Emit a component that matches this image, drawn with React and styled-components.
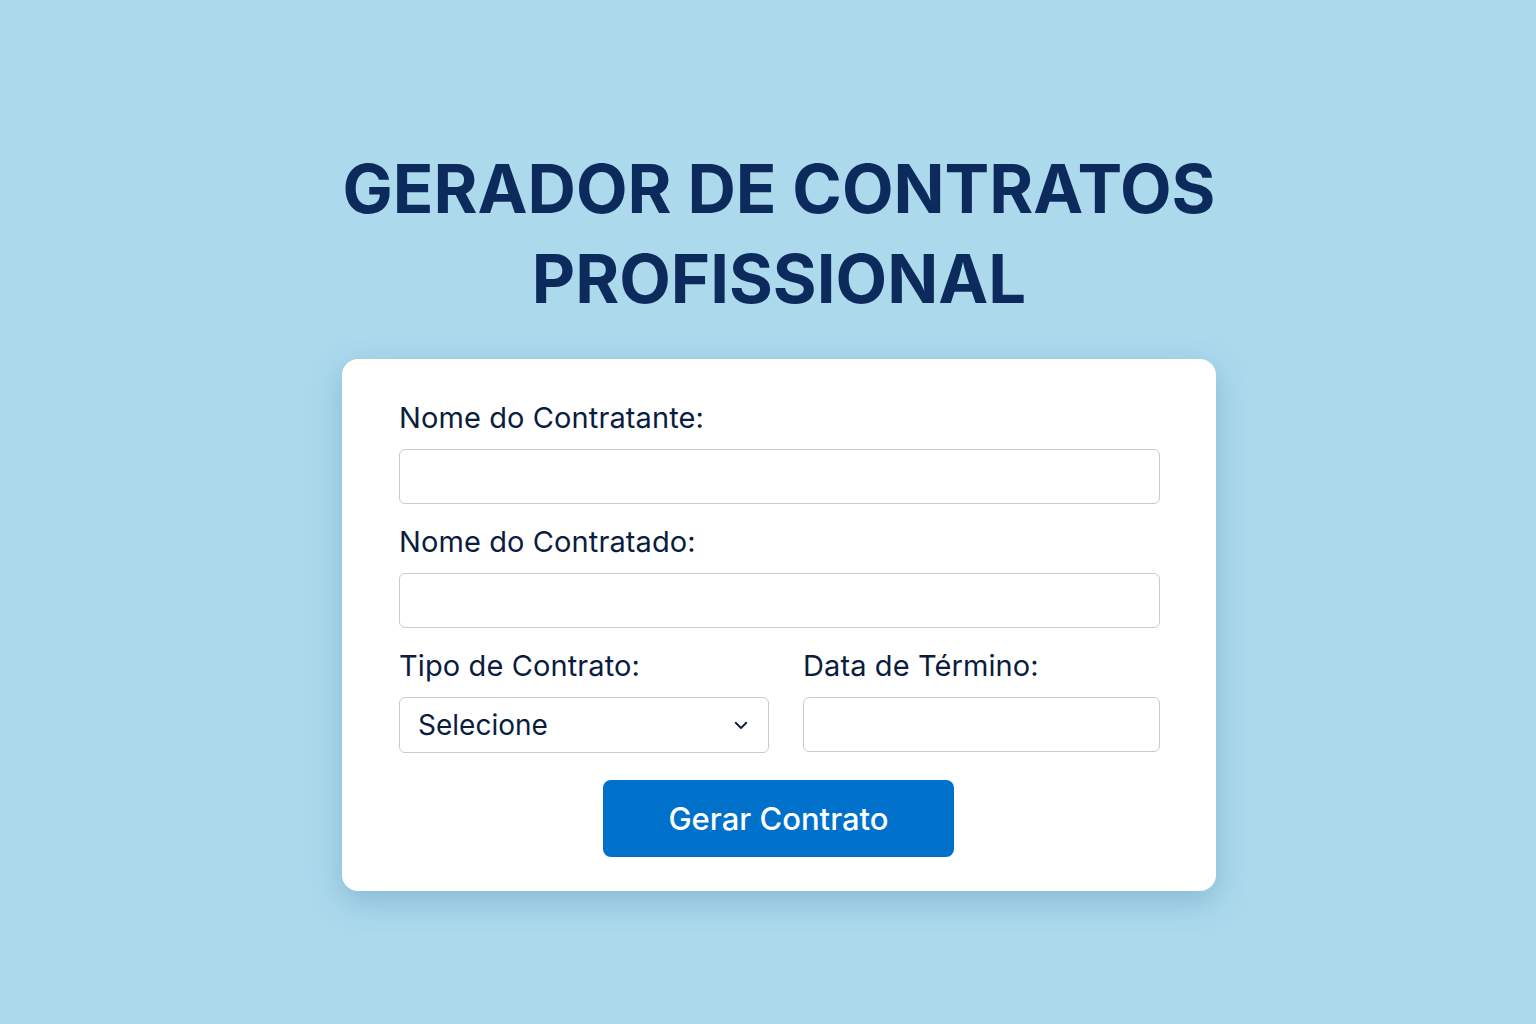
import styled, { createGlobalStyle } from 'styled-components'

const GlobalStyle = createGlobalStyle`
  html, body {
    margin: 0;
    padding: 0;
    background: #acd9ec;
  }
  * { box-sizing: border-box; }
`

const Page = styled.div`
  width: 1536px;
  height: 1024px;
  background: #acd9ec;
  display: flex;
  flex-direction: column;
  align-items: center;
  padding-top: 144px;
  padding-left: 22px;
  font-family: Inter, "Noto Sans", sans-serif;
`

const Title = styled.h1`
  margin: 0 0 35px;
  text-align: center;
  color: #0d2a5c;
  font-size: 67px;
  font-weight: 700;
  line-height: 90px;
  letter-spacing: 0;
`

const Card = styled.form`
  width: 874px;
  background: #ffffff;
  border-radius: 16px;
  padding: 40px 56px 34px 57px;
  box-shadow: 0 10px 30px rgba(60, 130, 170, 0.35);
  display: flex;
  flex-direction: column;
`

const Field = styled.div`
  display: flex;
  flex-direction: column;
  flex: ${p => p.$grow || 'none'};
  margin-bottom: 19px;
`

const Row = styled.div`
  display: flex;
  gap: 34px;
`

const Label = styled.label`
  color: #0b1d3f;
  font-size: 29px;
  line-height: 38px;
  margin-bottom: 12px;
  letter-spacing: 0.1px;
`

const Input = styled.input`
  height: 55px;
  width: 100%;
  border: 1.5px solid #c8cbd1;
  border-radius: 6px;
  background: #fff;
  font-family: inherit;
  font-size: 26px;
  padding: 0 18px;
  outline: none;
`

const SelectBox = styled.div`
  height: 56px;
  width: 370px;
  border: 1.5px solid #c8cbd1;
  border-radius: 6px;
  display: flex;
  align-items: center;
  justify-content: space-between;
  padding: 0 18px 0 18px;
  color: #0b1d3f;
  font-size: 28px;
`

const Button = styled.button`
  align-self: center;
  margin: 8px 0 0 -2px;
  width: 351px;
  height: 77px;
  border: none;
  border-radius: 8px;
  background: #0071cb;
  color: #ffffff;
  font-family: inherit;
  font-size: 31px;
  font-weight: 500;
  cursor: pointer;
`

const Chevron = () => (
  <svg width="18" height="18" viewBox="0 0 24 24" fill="none" stroke="#0b1d3f" strokeWidth="2.4" strokeLinecap="round" strokeLinejoin="round">
    <path d="M5 9l7 7 7-7" />
  </svg>
)

export default function App() {
  return (
    <>
      <GlobalStyle />
      <Page>
        <Title>GERADOR DE CONTRATOS<br />PROFISSIONAL</Title>
        <Card onSubmit={e => e.preventDefault()}>
          <Field>
            <Label>Nome do Contratante:</Label>
            <Input type="text" />
          </Field>
          <Field>
            <Label>Nome do Contratado:</Label>
            <Input type="text" />
          </Field>
          <Row>
            <Field>
              <Label>Tipo de Contrato:</Label>
              <SelectBox>
                <span>Selecione</span>
                <Chevron />
              </SelectBox>
            </Field>
            <Field $grow="1">
              <Label>Data de Término:</Label>
              <Input type="text" />
            </Field>
          </Row>
          <Button type="submit">Gerar Contrato</Button>
        </Card>
      </Page>
    </>
  )
}
